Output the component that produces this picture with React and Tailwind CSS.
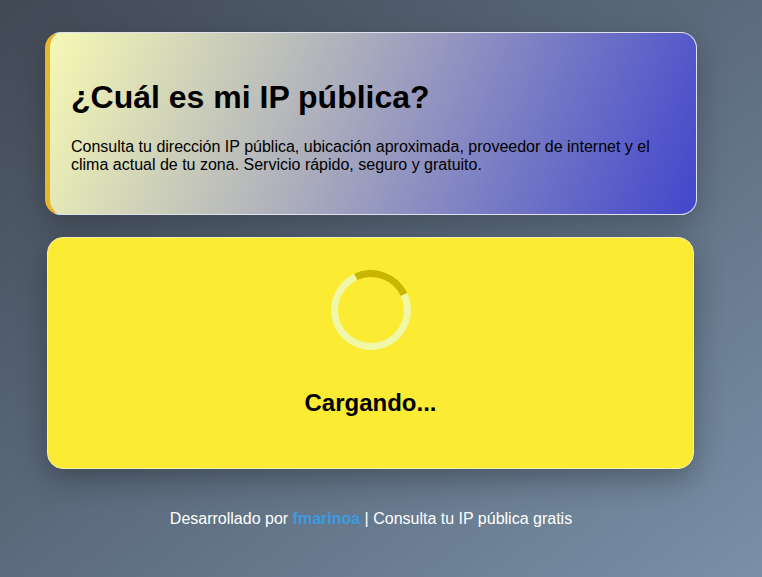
import React from "react";

const App = () => {
  return (
    <div className="min-h-screen w-full bg-gradient-to-br from-[#414955] to-[#7990a8] font-['Liberation_Sans',Arial,sans-serif] pt-[32px] pb-[40px]">
      <div className="w-[652px] ml-[45px] flex flex-col">
        <div className="rounded-[16px] border border-[#dfe2ec] border-l-[5px] border-l-[#e9b52c] bg-[linear-gradient(112deg,#f6f9b4_0%,#a8aabd_45%,#4246cc_100%)] pl-[21px] pr-[24px] pt-[46px] pb-[40px] shadow-[0_10px_30px_rgba(0,0,0,0.25)]">
          <h1 className="text-[32px] font-bold text-black leading-[36px]">
            ¿Cuál es mi IP pública?
          </h1>
          <p className="mt-[23px] text-[16px] leading-[18px] text-black">
            Consulta tu dirección IP pública, ubicación aproximada, proveedor de internet y el clima actual de tu zona. Servicio rápido, seguro y gratuito.
          </p>
        </div>

        <div className="mt-[22px] ml-[2px] w-[647px] rounded-[16px] border border-[#f3efb0] bg-[#fbec33] pt-[32px] pb-[51px] flex flex-col items-center shadow-[0_10px_30px_rgba(0,0,0,0.3)]">
          <div className="w-[80px] h-[80px] rounded-full border-[7px] border-[#f1f7a8] border-t-[#c9b600] rotate-[20deg]"></div>
          <div className="mt-[39px] text-[24px] font-bold text-black leading-[28px]">
            Cargando...
          </div>
        </div>

        <div className="mt-[41px] text-center text-[16px] text-white leading-[18px]">
          Desarrollado por <span className="font-bold text-[#3a9be0]">fmarinoa</span> | Consulta tu IP pública gratis
        </div>
      </div>
    </div>
  );
};

export default App;
